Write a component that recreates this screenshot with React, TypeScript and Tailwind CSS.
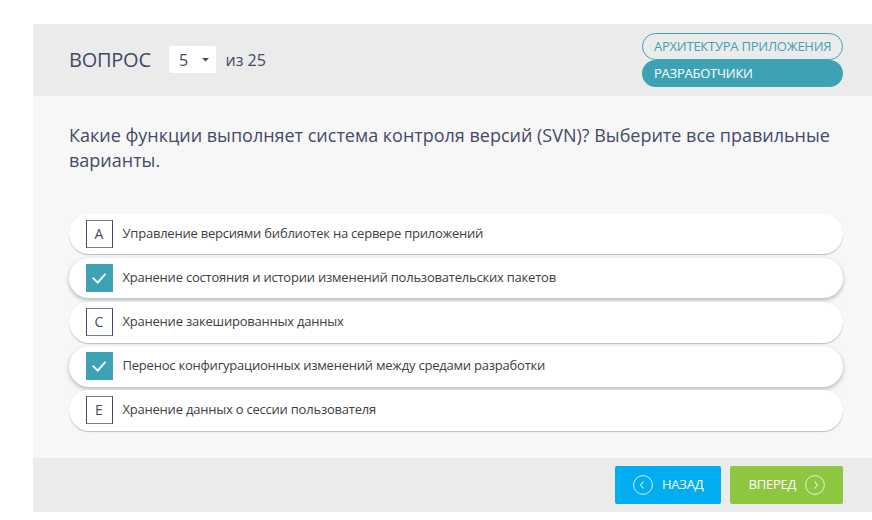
import React from 'react';

type Option = { letter: string; text: string; checked: boolean };

const options: Option[] = [
  { letter: 'A', text: 'Управление версиями библиотек на сервере приложений', checked: false },
  { letter: 'B', text: 'Хранение состояния и истории изменений пользовательских пакетов', checked: true },
  { letter: 'C', text: 'Хранение закешированных данных', checked: false },
  { letter: 'D', text: 'Перенос конфигурационных изменений между средами разработки', checked: true },
  { letter: 'E', text: 'Хранение данных о сессии пользователя', checked: false },
];

function CheckMark() {
  return (
    <svg width="27" height="28" viewBox="0 0 27 28" fill="none">
      <path d="M6.6 13.6 L11.7 18.6 L19.4 9.9" stroke="white" strokeWidth="1.9" />
    </svg>
  );
}

function CircleArrow({ back }: { back?: boolean }) {
  return (
    <svg width="20" height="20" viewBox="0 0 20 20" fill="none" stroke="white" className="shrink-0">
      <circle cx="10" cy="10" r="9.4" strokeOpacity="0.8" />
      <path d={back ? 'M10.5 6.5 L7.5 10 L10.5 13.5' : 'M9.5 6.5 L12.5 10 L9.5 13.5'} strokeOpacity="0.8" strokeWidth="1.1" />
    </svg>
  );
}

function OptionRow({ option }: { option: Option }) {
  return (
    <div
      className={`flex h-[40.4px] items-center rounded-full bg-white pl-[17px] ${
        option.checked ? 'shadow-[0_2px_4px_rgba(60,80,85,0.38)]' : 'shadow-[0_1px_1px_rgba(0,0,0,0.24)]'
      }`}
    >
      {option.checked ? (
        <div className="h-7 w-[27px] bg-[#3ea2b5]">
          <CheckMark />
        </div>
      ) : (
        <div className="flex h-7 w-[27px] items-center justify-center border border-x-[#434a68] border-y-[#74798e] pr-px text-[14px] leading-none text-[#434a68]">
          {option.letter}
        </div>
      )}
      <div className="ml-[9.5px] pb-[2.8px] text-[13px] leading-5 tracking-[-0.22px] whitespace-nowrap text-[#404040]">
        {option.text}
      </div>
    </div>
  );
}

export default function App() {
  return (
    <div className="h-[520px] w-[872px] overflow-hidden bg-white pt-6 pl-[33px] font-['Open_Sans','Noto_Sans',sans-serif] text-[#434a68]">
      <div className="flex h-[488px] flex-col overflow-hidden rounded-l-[2px] bg-[#f7f7f7]">
        <header className="flex h-[72px] shrink-0 items-center justify-between bg-[#ebebeb] pr-[29px] pl-9">
          <div className="flex items-center pb-px">
            <span className="w-[100px] text-[20px] leading-7 tracking-[-0.25px]">ВОПРОС</span>
            <div className="flex h-[27px] w-[47px] items-center justify-between rounded-[2px] bg-white pr-[7px] pl-[10px] text-base">
              <span>5</span>
              <svg width="7" height="4" viewBox="0 0 7 4">
                <path d="M0 0 H7 L3.5 3.5 Z" fill="#434a68" />
              </svg>
            </div>
            <span className="ml-[9.5px] text-base">из 25</span>
          </div>
          <div className="w-[201px] text-[13px] tracking-[-0.24px]">
            <div className="flex h-[27px] items-center rounded-full border border-[#3ea2b5] pl-[11px] whitespace-nowrap text-[#3ea2b5]">
              АРХИТЕКТУРА ПРИЛОЖЕНИЯ
            </div>
            <div className="flex h-[27px] items-center rounded-full bg-[#3ea2b5] pl-3 text-white">РАЗРАБОТЧИКИ</div>
          </div>
        </header>
        <main className="grow pt-[27px] pr-[29px] pl-9">
          <h1 className="h-[91px] text-[18px] leading-[25px] tracking-[-0.01px]">
            Какие функции выполняет система контроля версий (SVN)? Выберите все правильные
            <br />
            варианты.
          </h1>
          <div className="flex flex-col gap-[3.68px]">
            {options.map((option) => (
              <OptionRow key={option.letter} option={option} />
            ))}
          </div>
        </main>
        <footer className="flex h-[54px] shrink-0 items-center justify-end gap-[9px] bg-[#ebebeb] pr-[29px] text-[13px] tracking-[-0.22px] text-white">
          <button className="flex h-[38px] w-[106px] items-center gap-[9px] rounded-[2px] bg-[#00aeef] pl-[18px]">
            <CircleArrow back />
            <span>НАЗАД</span>
          </button>
          <button className="flex h-[38px] w-[113px] items-center justify-between rounded-[2px] bg-[#8dc63f] pr-[18px] pl-[18.5px]">
            <span>ВПЕРЕД</span>
            <CircleArrow />
          </button>
        </footer>
      </div>
    </div>
  );
}
